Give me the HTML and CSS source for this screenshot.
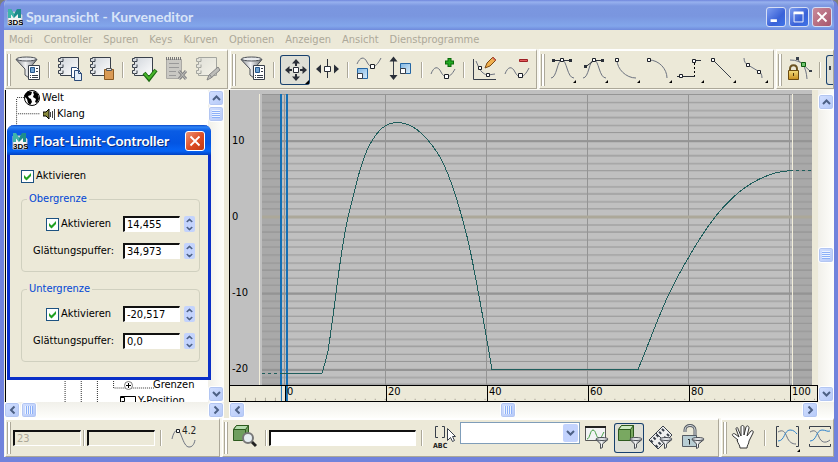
FILE: index.html
```html
<!DOCTYPE html>
<html lang="de">
<head>
<meta charset="utf-8">
<title>Spuransicht - Kurveneditor</title>
<link rel="stylesheet" href="styles.css">
</head>
<body>
<svg class="defs" aria-hidden="true">
  <defs>
    <linearGradient id="metal"><stop offset="0" stop-color="#8b8e92"/><stop offset=".45" stop-color="#f2f3f4"/><stop offset="1" stop-color="#6b6f75"/></linearGradient>
    <linearGradient id="paper" x1="0" y1="0" x2="1" y2="1"><stop offset="0" stop-color="#cfd4da"/><stop offset="1" stop-color="#ffffff"/></linearGradient>
    <linearGradient id="blue" x1="0" y1="0" x2="1" y2="1"><stop offset="0" stop-color="#7fb6e4"/><stop offset="1" stop-color="#d8ebf8"/></linearGradient>
    <linearGradient id="gold" x1="0" y1="0" x2="0" y2="1"><stop offset="0" stop-color="#f3dc7c"/><stop offset="1" stop-color="#c98f1e"/></linearGradient>
    <symbol id="app" viewBox="0 0 16 17">
      <path d="M1 3h11l3 3v10H1z" fill="#f4f4f4" stroke="#b9c3cc"/>
      <path d="M1 9V0h3l3 5 3-5h4v9h-3V5L7 9 4 5v4z" fill="#1d8d8c"/>
      <path d="M1 0h3l3 5v4L4 5v4H1z" fill="#3fb4a9"/>
      <text x="1" y="16" class="app-text">3DS</text>
    </symbol>
    <symbol id="funnel-page" viewBox="0 0 30 30">
      <path d="M3 4.500L12 14v6l4 3v-9l8-9.500z" fill="url(#metal)" stroke="#4a4e55"/>
      <ellipse cx="13.500" cy="4" rx="10" ry="2" fill="#e9ebed" stroke="#4a4e55"/>
      <path d="M15.500 10.500h11v14h-11z" fill="#fff" stroke="#39404b"/>
      <path d="M17.500 12.500h4v5h-4z" fill="#6fa2d2" stroke="#24558a"/>
      <path d="M23 13.500h2M23 16.500h2M19 20.500h6M19 22.500h6M17 20.500h1M17 22.500h1" stroke="#39404b"/>
    </symbol>
    <symbol id="notebook" viewBox="0 0 30 30">
      <path d="M5.500 2.500h18v18h-18v-2h-2v-3h2v-3h-2v-3h2v-3h-2v-3h2z" fill="url(#paper)" stroke="#39404b"/>
      <path d="M6 6.500h2v-3M6 12.500h2v-3M6 18.500h2v-3" fill="none" stroke="#39404b"/>
    </symbol>
    <symbol id="small-funnel" viewBox="0 0 14 12">
      <path d="M1 2.500L5.500 7v4.500l2-1V7L13 2.500z" fill="url(#metal)" stroke="#4a4e55"/>
      <ellipse cx="7" cy="2" rx="6" ry="1.500" fill="#e4e6e9" stroke="#4a4e55"/>
    </symbol>
    <symbol id="flyout" viewBox="0 0 4 4"><path d="M4 0v4H0z" fill="#000"/></symbol>
    <symbol id="chev" viewBox="0 0 9 6"><path d="M1 5l3.500-3.500L8 5" fill="none" stroke="#4d6185" stroke-width="2"/></symbol>
    <symbol id="tick" viewBox="0 0 13 13"><path d="M3 5v3l2.500 2.500L10 6V3L5.500 7.500z" fill="#21a121"/></symbol>
  </defs>
</svg>

<div class="window">
  <header class="titlebar">
    <svg class="app-icon" aria-hidden="true"><use href="#app"/></svg>
    <h1>Spuransicht - Kurveneditor</h1>
    <div class="caption-buttons">
      <button class="cap" aria-label="Minimieren"><svg viewBox="0 0 20 20"><path d="M4 14h7" stroke="#fff" stroke-width="3"/></svg></button>
      <button class="cap" aria-label="Maximieren"><svg viewBox="0 0 20 20"><path d="M4.500 5v10.500h10V5" fill="none" stroke="#fff"/><path d="M4 5.500h11" stroke="#fff" stroke-width="3"/></svg></button>
      <button class="cap cap-close" aria-label="Schließen"><svg viewBox="0 0 20 20"><path d="M5 5l10 10M15 5L5 15" stroke="#fff" stroke-width="2"/></svg></button>
    </div>
  </header>

  <nav class="menu">
    <button>Modi</button><button>Controller</button><button>Spuren</button><button>Keys</button><button>Kurven</button><button>Optionen</button><button>Anzeigen</button><button>Ansicht</button><button>Dienstprogramme</button>
  </nav>

  <div class="bar bar-top">
    <div class="group">
      <span class="grip"></span>
      <button class="tool" aria-label="Filter"><svg viewBox="0 0 30 30"><use href="#funnel-page"/></svg></button>
      <span class="sep"></span>
      <button class="tool" aria-label="Kopieren"><svg viewBox="0 0 30 30"><use href="#notebook"/><path d="M16.500 12.500h5l3 3v7h-8z" fill="#fff" stroke="#2b4a78"/><path d="M19.500 15.500h4l3 3v7h-7z" fill="#e3edf8" stroke="#2b4a78"/><path d="M23.500 15.500v3h3" fill="none" stroke="#2b4a78"/></svg></button>
      <button class="tool" aria-label="Einfügen"><svg viewBox="0 0 30 30"><use href="#notebook"/><path d="M17.500 14.500h9v10h-9z" fill="#d99a55" stroke="#8c5a22"/><path d="M19.500 13.500h5v2h-5z" fill="#e6e6e6" stroke="#555"/></svg></button>
      <span class="sep"></span>
      <button class="tool" aria-label="Zuweisen"><svg viewBox="0 0 30 30"><use href="#notebook"/><path d="M15 18l5 6 7-9" fill="none" stroke="#1d6b12" stroke-width="4"/><path d="M15.500 18.500l4.500 5 6.500-8" fill="none" stroke="#48b52b" stroke-width="2"/></svg></button>
      <button class="tool" aria-label="Löschen"><svg viewBox="0 0 30 30"><path d="M5.500 4.500h15v19h-15z" fill="#c9c8c3" stroke="#aaa9a4"/><path d="M5 3.500h16" stroke="#777" stroke-width="3" stroke-dasharray="1 1"/><path d="M8 8.500h10M8 12.500h10M8 16.500h7M8 20.500h7" stroke="#999"/><path d="M18 16l7 8M25 16l-7 8" stroke="#888" stroke-width="3"/><path d="M18 16l7 8M25 16l-7 8" stroke="#c2c2be"/></svg></button>
      <button class="tool" aria-label="Bearbeiten"><svg viewBox="0 0 30 30"><g opacity=".4"><use href="#notebook"/></g><path d="M14 25l2-5 9-8 2 3-9 8z" fill="#bdbdb9" stroke="#858585"/><path d="M17 20l2 3" stroke="#858585"/></svg></button>
    </div>
    <div class="group">
      <span class="grip"></span>
      <button class="tool" aria-label="Filter"><svg viewBox="0 0 30 30"><use href="#funnel-page"/></svg></button>
      <span class="sep"></span>
      <button class="tool pressed" aria-label="Keys verschieben"><svg viewBox="0 0 30 30"><path d="M13.500 12.500h5v5h-5z" fill="#fff" stroke="#2a2f38"/><path d="M16 7v4M16 19v4M8 15h4M20 15h4" stroke="#2a2f38" stroke-width="2"/><path d="M16 4l4 4.500h-8zM16 26l4-4.500h-8zM5 15l4.500-4v8zM27 15l-4.500-4v8z" fill="#2a2f38"/><use href="#flyout" x="25" y="25" width="4" height="4"/></svg></button>
      <button class="tool" aria-label="Keys schieben"><svg viewBox="0 0 30 30"><path d="M15.500 4v19" stroke="#2a2f38"/><path d="M12.500 11.500h6v5h-6z" fill="#fff" stroke="#2a2f38"/><path d="M4 14l5-4.500v9zM27 14l-5-4.500v9z" fill="#2a2f38"/></svg></button>
      <span class="sep"></span>
      <button class="tool" aria-label="Keys skalieren"><svg viewBox="0 0 30 30"><path d="M3 9c3-7 7-8 10-2s8 8 14-4" class="curve"/><path d="M16.500 9.500h4v4h-4z" class="key"/><path d="M3.500 13.500h10v10h-10z" fill="url(#blue)" stroke="#2466a4"/><path d="M3.500 18.500h5v5h-5z" fill="#fff" stroke="#39404b"/></svg></button>
      <button class="tool" aria-label="Werte skalieren"><svg viewBox="0 0 30 30"><path d="M7.500 4v19" stroke="#39404b"/><path d="M7.500 1.500l4 5h-8zM7.500 25l4-5h-8z" fill="#2a2f38"/><path d="M14.500 8.500h10v10h-10z" fill="url(#blue)" stroke="#2466a4"/><path d="M14.500 13.500h5v5h-5z" fill="#fff" stroke="#39404b"/></svg></button>
      <span class="sep"></span>
      <button class="tool" aria-label="Keys hinzufügen"><svg viewBox="0 0 30 30"><path d="M3 19c3-8 7-8 10-2s8 8 14-3" class="curve"/><path d="M16.500 19.500h4v4h-4z" class="key"/><path d="M21.500 3v9M17 7.500h9" stroke="#0a6a0a" stroke-width="4"/><path d="M21.500 4v7M18 7.500h7" stroke="#22a922" stroke-width="2"/></svg></button>
      <span class="sep"></span>
      <button class="tool" aria-label="Kurven zeichnen"><svg viewBox="0 0 30 30"><path d="M3.500 4v20.500H26" fill="none" stroke="#39404b"/><path d="M6 6l3 7c2 4 6 7 9 7l7-1" class="curve"/><path d="M8.500 11.500h3v3h-3zM16.500 18.500h3v3h-3z" class="key"/><path d="M15 13l2-5 6-6 3 3-6 6z" fill="#f0b04d" stroke="#7b4a14"/><path d="M22 3l3 3 1-1-3-3z" fill="#d25e57"/></svg></button>
      <button class="tool" aria-label="Keys reduzieren"><svg viewBox="0 0 30 30"><path d="M3 19c3-8 7-8 10-2s8 8 14-4" class="curve"/><path d="M16.500 18.500h4v4h-4z" class="key"/><path d="M17.500 4.500h8v2h-8z" fill="#e25c5c" stroke="#9c1f24"/></svg></button>
    </div>
    <div class="group">
      <span class="grip"></span>
      <button class="tool" aria-label="Automatische Tangente"><svg viewBox="0 0 30 30"><path d="M4 23c6 0 6-18 11-18s5 18 12 18" class="curve"/><path d="M7 5.500h16" stroke="#2a2f38"/><path d="M5 4h3v3H5zM22 4h3v3h-3z" fill="#2a2f38"/><path d="M13.500 3.500h3v3h-3z" class="key"/><use href="#flyout" x="26" y="25" width="3" height="3"/></svg></button>
      <button class="tool" aria-label="Spline-Tangente"><svg viewBox="0 0 30 30"><path d="M4 23c6 0 6-18 11-18s5 18 12 18" class="curve"/><path d="M7 11.500l8-6h8" fill="none" stroke="#2a2f38"/><path d="M5 10h3v3H5zM22 4h3v3h-3z" fill="#2a2f38"/><path d="M13.500 3.500h3v3h-3z" class="key"/><use href="#flyout" x="26" y="25" width="3" height="3"/></svg></button>
      <button class="tool" aria-label="Schnelle Tangente"><svg viewBox="0 0 30 30"><path d="M6 5c0 9 9 18 19 18" class="curve"/><path d="M4.500 3.500h3v3h-3z" class="key"/><use href="#flyout" x="26" y="25" width="3" height="3"/></svg></button>
      <button class="tool" aria-label="Langsame Tangente"><svg viewBox="0 0 30 30"><path d="M6 5c10 0 18 9 18 18" class="curve"/><path d="M4.500 3.500h3v3h-3z" class="key"/><use href="#flyout" x="26" y="25" width="3" height="3"/></svg></button>
      <button class="tool" aria-label="Stufentangente"><svg viewBox="0 0 30 30"><path d="M2 21.500h18M20 5.500h6" stroke="#2a2f38"/><path d="M19.500 8v13" stroke="#000" stroke-dasharray="2 2"/><path d="M4.500 19.500h3v3h-3zM17.500 4.500h3v3h-3z" class="key"/><use href="#flyout" x="26" y="25" width="3" height="3"/></svg></button>
      <button class="tool" aria-label="Lineare Tangente"><svg viewBox="0 0 30 30"><path d="M6 5l18 18" stroke="#39404b"/><path d="M4.500 3.500h3v3h-3z" class="key"/><use href="#flyout" x="26" y="25" width="3" height="3"/></svg></button>
      <button class="tool" aria-label="Glatte Tangente"><svg viewBox="0 0 30 30"><path d="M5 3c0 4 2 6 4 7l10 6c3 1 4 4 4 7" class="curve"/><path d="M7.500 8.500h3v3h-3zM18.500 15.500h3v3h-3z" class="key"/><use href="#flyout" x="26" y="25" width="3" height="3"/></svg></button>
    </div>
    <div class="group group-end">
      <span class="grip"></span>
      <button class="tool" aria-label="Tangenten sperren"><svg viewBox="0 0 30 30"><path d="M6 5c13 0 16 7 17 19M13 4l13 12" class="curve"/><path d="M12 2h3v3h-3zM25 15h3v2h-3z" fill="#39404b"/><path d="M17.500 7.500h4v4h-4z" fill="#6fc46f" stroke="#0e5d0e"/><path d="M6 16v-2c0-5 7-5 7 0v2" fill="none" stroke="#6d5524" stroke-width="2"/><path d="M4.500 15.500h10v9h-10z" fill="url(#gold)" stroke="#6b4a0f"/><path d="M9.500 18v3" stroke="#4a330a"/></svg></button>
      <span class="sep"></span>
      <button class="tool pressed" aria-label="Rahmen"><svg viewBox="0 0 30 30"><path d="M4 11v4" stroke="#39404b" stroke-width="2"/></svg></button>
    </div>
  </div>

  <main class="work">
    <section class="tree-panel">
      <div class="panel-row">
        <div class="tree">
          <svg class="branches" viewBox="0 0 200 313" preserveAspectRatio="xMinYMin slice" aria-hidden="true"><path d="M11 7.500h8M10.500 9v40M12 23.500h22" /><path d="M58.500 280v33M74.500 280v33M90.500 280v33M106.500 280v15h40" /></svg>
          <ul>
            <li class="welt"><svg viewBox="0 0 16 16"><circle cx="8" cy="8" r="7.500" fill="#fff" stroke="#000"/><path d="M1 4l3-3 4 1-1 3-3 1 1 2 2 1 1 3-2 3-2-2-1-4-3-3zM10 1l4 3 1 5-2 4-2-1 1-3-3-2 1-3-1-1z"/></svg>Welt</li>
            <li class="klang"><svg viewBox="0 0 12 12"><path d="M0 4h3l3-3v10L3 8H0z" fill="#8a8a3c" stroke="#000"/><path d="M7.500 4v5M9.500 3v7M11.500 1v11" stroke="#444"/></svg>Klang</li>
          </ul>
          <ul>
            <li class="grenzen"><svg viewBox="0 0 9 9"><circle cx="4.500" cy="4.500" r="4" fill="#fff" stroke="#777"/><path d="M2 4.500h5M4.500 2v5" stroke="#000"/></svg>Grenzen</li>
            <li class="ypos"><svg viewBox="0 0 16 16"><path d="M15.500 3.500H.500v12M15.500 3.500v12M.500 4.500h4v4h-3" fill="none" stroke="#000"/></svg>Y-Position</li>
          </ul>
        </div>
        <div class="scroll-v">
          <button class="sbtn" aria-label="Nach oben"><svg viewBox="0 0 9 6"><use href="#chev"/></svg></button>
          <span class="thumb"></span><span class="track"></span>
          <button class="sbtn down" aria-label="Nach unten"><svg viewBox="0 0 9 6"><use href="#chev"/></svg></button>
        </div>
      </div>
      <div class="scroll-h">
        <button class="sbtn left" aria-label="Nach links"><svg viewBox="0 0 9 6"><use href="#chev"/></svg></button>
        <span class="thumb"></span><span class="track"></span>
        <button class="sbtn right" aria-label="Nach rechts"><svg viewBox="0 0 9 6"><use href="#chev"/></svg></button>
      </div>
    </section>

    <section class="graph-panel">
      <div class="panel-row">
        <div class="graph">
          <div class="plot-row">
            <ol class="values"><li>10</li><li>0</li><li>-10</li><li>-20</li></ol>
            <svg class="plot" viewBox="262 94 550 290" preserveAspectRatio="none" role="img" aria-label="Funktionskurve">
              <defs><pattern id="rows" x="262" y="94" width="550" height="38" patternUnits="userSpaceOnUse"><path d="M0 .500h550M0 8.500h550M0 16.500h550M0 23.500h550M0 31.500h550" stroke="#949494"/></pattern></defs>
              <path d="M262 94h550v290H262z" fill="#c0c0c0"/>
              <path d="M262 94h19v290h-19zM793 94h19v290h-19z" fill="#a9a9a9"/>
              <path d="M262 94h550v290H262z" fill="url(#rows)"/>
              <path d="M284.500 94v290M385.500 94v290M486.500 94v290M587.500 94v290M688.500 94v290M789.500 94v290" stroke="#949494"/>
              <path d="M262 141h550M262 293h550M262 369h550" stroke="#949494" stroke-width="2"/>
              <path d="M262 216.500h550" stroke="#aca899" stroke-width="3"/>
              <path d="M792.500 94v290" stroke="#f2eeda"/>
              <path d="M281 94v290M287 94v290" stroke="#146fb4" stroke-width="2"/>
              <path class="graph-line" d="M262 372.500h19M790 170.500h22" stroke-dasharray="3 3"/>
              <path class="graph-line" d="M281 372.500H322L325 362 328 350C336 300 340 250 348 217S362 158 370 144 385 122.500 398 122.500 425 134 437 152 460 208 467 236 481 305 492 368.500H638C648 345 660 311 671 289S690 254 700 238 720 209 733 197 768 171 790 170.500"/>
            </svg>
          </div>
          <div class="ruler">
            <svg viewBox="230 386 588 14" preserveAspectRatio="none" aria-hidden="true"><path d="M245.500 397v3M255.500 397v3M265.500 397v3M275.500 397v3M285 398.500h533" stroke="#aca899" /><path d="M286 398.500h532" stroke="#ece9d8" stroke-width="3" stroke-dasharray="9 1"/><path d="M281.500 386v14" stroke="#146fb4"/><path d="M287 386v14" stroke="#146fb4" stroke-width="2"/></svg>
            <ol><li>0</li><li>20</li><li>40</li><li>60</li><li>80</li><li>100</li></ol>
          </div>
        </div>
        <div class="scroll-v graph-scroll">
          <button class="sbtn" aria-label="Nach oben"><svg viewBox="0 0 9 6"><use href="#chev"/></svg></button>
          <span class="track before"></span><span class="thumb"></span><span class="track after"></span>
          <button class="sbtn down" aria-label="Nach unten"><svg viewBox="0 0 9 6"><use href="#chev"/></svg></button>
        </div>
      </div>
      <div class="scroll-h graph-scroll-h">
        <button class="sbtn left" aria-label="Nach links"><svg viewBox="0 0 9 6"><use href="#chev"/></svg></button>
        <span class="track before"></span><span class="thumb"></span><span class="track after"></span>
        <button class="sbtn right" aria-label="Nach rechts"><svg viewBox="0 0 9 6"><use href="#chev"/></svg></button>
      </div>
    </section>

    <section class="dialog" role="dialog" aria-labelledby="dialog-title">
      <header>
        <svg class="app-icon" aria-hidden="true"><use href="#app"/></svg>
        <h2 id="dialog-title">Float-Limit-Controller</h2>
        <button class="cap close-active" aria-label="Schließen"><svg viewBox="0 0 20 20"><path d="M5 5l10 10M15 5L5 15" stroke="#fff" stroke-width="2"/></svg></button>
      </header>
      <div class="dialog-body">
        <label class="check"><input type="checkbox" checked><svg viewBox="0 0 13 13"><use href="#tick"/></svg>Aktivieren</label>
        <fieldset>
          <legend>Obergrenze</legend>
          <div class="line"><label class="check"><input type="checkbox" checked><svg viewBox="0 0 13 13"><use href="#tick"/></svg>Aktivieren</label><input class="sunken" type="text" value="14,455" aria-label="Obergrenze"><span class="spin"><button aria-label="Mehr"><svg viewBox="0 0 9 6"><use href="#chev"/></svg></button><button class="down" aria-label="Weniger"><svg viewBox="0 0 9 6"><use href="#chev"/></svg></button></span></div>
          <div class="line"><label for="buf1">Glättungspuffer:</label><input class="sunken" id="buf1" type="text" value="34,973"><span class="spin"><button aria-label="Mehr"><svg viewBox="0 0 9 6"><use href="#chev"/></svg></button><button class="down" aria-label="Weniger"><svg viewBox="0 0 9 6"><use href="#chev"/></svg></button></span></div>
        </fieldset>
        <fieldset>
          <legend>Untergrenze</legend>
          <div class="line"><label class="check"><input type="checkbox" checked><svg viewBox="0 0 13 13"><use href="#tick"/></svg>Aktivieren</label><input class="sunken" type="text" value="-20,517" aria-label="Untergrenze"><span class="spin"><button aria-label="Mehr"><svg viewBox="0 0 9 6"><use href="#chev"/></svg></button><button class="down" aria-label="Weniger"><svg viewBox="0 0 9 6"><use href="#chev"/></svg></button></span></div>
          <div class="line"><label for="buf2">Glättungspuffer:</label><input class="sunken" id="buf2" type="text" value="0,0"><span class="spin"><button aria-label="Mehr"><svg viewBox="0 0 9 6"><use href="#chev"/></svg></button><button class="down" aria-label="Weniger"><svg viewBox="0 0 9 6"><use href="#chev"/></svg></button></span></div>
        </fieldset>
      </div>
    </section>
  </main>

  <div class="bar bar-bottom">
    <div class="group group-stats">
      <span class="grip"></span>
      <input class="sunken stat" type="text" value="23" disabled aria-label="Frame">
      <span class="sep tight"></span>
      <input class="sunken stat" type="text" value="" disabled aria-label="Wert">
      <span class="sep"></span>
      <button class="tool" aria-label="Statistik"><svg viewBox="0 0 30 30"><path d="M5 16c2-9 6-12 9-4s5 12 8 12 5-2 6-7" class="curve"/><path d="M9.500 6.500h3v3h-3z" class="key"/><text x="15" y="11" class="icon-text">4.2</text></svg></button>
    </div>
    <div class="group group-select">
      <span class="grip"></span>
      <button class="tool" aria-label="Zoom auf Objekt"><svg viewBox="0 0 30 30"><path d="M3.500 6.500l3-4h12v11l-3 4h-12z" fill="#6f9e5e" stroke="#2d5a1e"/><path d="M3.500 6.500l3-4h12l-3 4z" fill="#b5dcae" stroke="#2d5a1e"/><path d="M15.500 6.500v11" stroke="#2d5a1e"/><path d="M21 18l5 5" stroke="#222" stroke-width="3"/><circle cx="18" cy="15" r="5" fill="#e6eef2" stroke="#777" stroke-width="2"/></svg></button>
      <span class="sep before-field"></span>
      <input class="sunken search" type="text" value="" aria-label="Name">
      <span class="sep"></span>
      <button class="tool" aria-label="Nach Namen bearbeiten"><svg viewBox="0 0 30 30"><path d="M10 3.500H7.500v11H10M14 3.500h2.500v11H14" fill="none" stroke="#39404b"/><path d="M19.500 5.500v12l3-3 2 4 2-1-2-4h3z" fill="#fff" stroke="#39404b"/><text x="5" y="25" class="icon-text abc">ABC</text></svg></button>
      <span class="combo"><select aria-label="Spurauswahl"><option></option></select><span class="combo-arrow"><svg viewBox="0 0 9 6"><use href="#chev"/></svg></span></span>
      <button class="tool" aria-label="Animierte Spuren"><svg viewBox="0 0 30 30"><path d="M3.500 3.500h20v14h-20z" fill="#f2f3f4" stroke="#555"/><path d="M3 4h21" stroke="#222" stroke-width="2"/><path d="M5 16c3 0 3-9 6-9s3 8 6 8 3-3 5-6" fill="none" stroke="#3e9a3e"/><use href="#small-funnel" x="13" y="14" width="14" height="12"/></svg></button>
      <button class="tool pressed" aria-label="Ausgewählte Objekte"><svg viewBox="0 0 30 30"><path d="M4.500 6.500l3-4h12v11l-3 4h-12z" fill="#79a861" stroke="#2d5a1e"/><path d="M4.500 6.500l3-4h12l-3 4z" fill="#cdeac2" stroke="#2d5a1e"/><path d="M16.500 6.500v11" stroke="#2d5a1e"/><use href="#small-funnel" x="15" y="14" width="14" height="12"/></svg></button>
      <button class="tool" aria-label="Ausgewählte Spuren"><svg viewBox="0 0 30 30"><path d="M3 17L17 3l9 9-14 14z" fill="#f0f0f0" stroke="#39404b"/><path d="M5 19L19 5M10 24L24 10" stroke="#39404b" stroke-width="3" stroke-dasharray="2 2"/><path d="M10 10l9 9" stroke="#39404b"/><use href="#small-funnel" x="13" y="14" width="14" height="12"/></svg></button>
      <button class="tool" aria-label="Nicht gesperrte Attribute"><svg viewBox="0 0 30 30"><path d="M7 9V7c0-6 10-6 10 0v6" fill="none" stroke="#555b63" stroke-width="3"/><path d="M7 9V7c0-6 10-6 10 0v6" fill="none" stroke="#dfe3e6"/><path d="M4.500 12.500h14v11h-14z" fill="#b8cdd3" stroke="#555b63"/><path d="M10 16.500h1.500v5" fill="none" stroke="#222"/><use href="#small-funnel" x="13" y="14" width="14" height="12"/></svg></button>
    </div>
    <div class="group group-end">
      <span class="grip"></span>
      <button class="tool" aria-label="Pan"><svg viewBox="0 0 30 30"><path d="M9 17L4 13c-2-2 1-3 2-2l4 3-3-8c0-2 2-2 2 0l3 7V4c0-2 3-2 3 0v8l2-8c1-2 3-1 3 1l-2 8 4-5c1-1 3 0 2 2l-4 8c0 3-2 4-2 7h-7c0-3-2-4-3-8z" fill="#fff" stroke="#333"/></svg></button>
      <span class="sep"></span>
      <button class="tool" aria-label="Horizontale Ausdehnung"><svg viewBox="0 0 30 30"><path d="M8 3.500H5.500v20H8M25 3.500h2.500v20H25" fill="none" stroke="#39404b"/><path d="M7 9c5-3 7 0 9 5s5 7 9 7" class="curve"/><path d="M7 18c7 0 6-11 12-11 4 0 5 2 7 4" fill="none" stroke="#2f83cc"/><use href="#flyout" x="26" y="26" width="3" height="3"/></svg></button>
      <button class="tool" aria-label="Vertikale Ausdehnung"><svg viewBox="0 0 30 30"><path d="M6.500 6V3.500h21V6M6.500 21v2.500h21V21" fill="none" stroke="#39404b"/><path d="M7 9c5-3 7 0 9 5s6 7 11 3" class="curve"/><path d="M7 18c7 0 6-11 12-11 4 0 5 2 8 1" fill="none" stroke="#2f83cc"/></svg></button>
    </div>
  </div>
</div>
</body>
</html>
```

FILE: styles.css
```css
* { box-sizing: border-box; }

body {
  margin: 0;
  background: #7d7f78;
  color: #000;
  font: 11px/14px "DejaVu Sans Condensed", "Open Sans", sans-serif;
}

button, input, select { font: inherit; color: inherit; margin: 0; padding: 0; }
button { border: 0; background: none; }
ul, ol { list-style: none; margin: 0; padding: 0; }
h1, h2 { margin: 0; font: bold 14px/18px Lato, sans-serif; white-space: nowrap; }
svg { display: block; }
.defs { position: absolute; width: 0; height: 0; }
.app-text { font: bold 8px "Liberation Sans", sans-serif; }
.app-icon { width: 16px; height: 17px; flex: none; }

.window {
  display: flex;
  flex-direction: column;
  height: 100vh;
  overflow: hidden;
  border: solid #7183dc;
  border-width: 0 4px 5px;
  border-radius: 7px 7px 0 0;
  background: #ece9d8;
}

/* Title bar */
.titlebar {
  display: flex;
  align-items: center;
  gap: 3px;
  height: 30px;
  flex: none;
  margin: 0 -4px;
  padding: 4px 6px 0 7px;
  background: linear-gradient(#6f86dc 0, #97b1ee 2px, #7b97e0 6px, #7a96df 16px, #82a6eb 26px, #6f8adc 30px);
}
.titlebar h1 { flex: 1; color: #d8e4f8; }
.caption-buttons { display: flex; gap: 3px; }
.cap {
  width: 20px;
  height: 20px;
  flex: none;
  border: 1px solid #d5def5;
  border-radius: 3px;
  background: linear-gradient(135deg, #7d9df0, #3a62d8 60%, #3f74e8);
}
.cap svg { width: 18px; height: 18px; }
.cap-close { background: linear-gradient(135deg, #c98a9a, #a8566c); }

/* Menu */
.menu { display: flex; gap: 11px; height: 19px; flex: none; padding: 0 5px; color: #aca899; }

/* Toolbars */
.bar { display: flex; gap: 2px; flex: none; padding-left: 1px; overflow: hidden; background: #f8f7f0; }
.bar-top { height: 41px; padding-bottom: 1px; }
.bar-bottom { height: 39px; }
.group {
  display: flex;
  align-items: center;
  gap: 2px;
  flex: none;
  padding: 0 4px 0 1px;
  border: solid #aca899;
  border-width: 0 1px 1px 0;
  border-top: 2px solid #fff;
  border-left: 1px solid #fff;
  background: #ece9d8;
}
.group-end { flex: 1 0 0; min-width: 0; overflow: hidden; padding-right: 0; }
.group-stats { width: 215px; }
.group-select { width: 497px; }
.grip {
  width: 4px;
  height: 32px;
  flex: none;
  border: solid #aca899;
  border-width: 0 1px;
  background: #fff;
}
.sep {
  width: 2px;
  height: 16px;
  flex: none;
  margin: 0 3px;
  border-left: 1px solid #aca899;
  background: #fff;
}
.sep.tight { margin: 0; }
.sep.before-field { margin-right: 0; }
.tool { width: 30px; height: 30px; flex: none; border-radius: 3px; }
.tool svg { width: 30px; height: 30px; }
.tool.pressed { box-shadow: inset 0 0 0 1px #17406d; background: #dedfd6; }
.curve { fill: none; stroke: #6d7380; }
.key { fill: #fff; stroke: #1c2028; }
.icon-text { font: 10px "DejaVu Sans Condensed", sans-serif; fill: #222; }
.icon-text.abc { font-size: 7px; font-weight: bold; }

.sunken {
  min-width: 0;
  height: 16px;
  border: 1px solid #fff;
  border-top: 2px solid #111;
  border-left: 2px solid #111;
  border-radius: 0;
  background: #fff;
  padding: 0 2px;
}
.stat { width: 68px; background: #ece9d8; color: #aca899; }
.search { width: 147px; }
.combo { display: flex; position: relative; width: 120px; height: 22px; margin-bottom: 10px; }
.combo select { flex: 1; appearance: none; border: 1px solid #7f9db9; border-radius: 0; background: #fff; }
.combo-arrow {
  position: absolute;
  top: 2px;
  right: 2px;
  display: flex;
  align-items: center;
  justify-content: center;
  width: 15px;
  height: 18px;
  border-radius: 2px;
  background: #c3d3fd;
  pointer-events: none;
}
.combo-arrow svg { width: 9px; height: 6px; transform: rotate(180deg); }

/* Scroll bars */
.scroll-v { display: flex; flex-direction: column; width: 16px; flex: none; background: linear-gradient(90deg, #f1f0ea, #fefefb); }
.scroll-h { display: flex; height: 16px; flex: none; background: linear-gradient(#f1f0ea, #fefefb); }
.sbtn, .thumb {
  display: flex;
  align-items: center;
  justify-content: center;
  width: 16px;
  height: 16px;
  flex: none;
  border: 1px solid #fff;
  border-radius: 3px;
  background: linear-gradient(135deg, #d3e0ff, #b5c9f8);
  box-shadow: inset 0 0 0 1px #b3c6f2;
}
.sbtn svg { width: 9px; height: 6px; flex: none; }
.down svg { transform: rotate(180deg); }
.left svg { transform: rotate(-90deg); }
.right svg { transform: rotate(90deg); }
.thumb::before { content: ""; width: 8px; height: 8px; background: repeating-linear-gradient(#eef4fe 0 1px, #8cb0f8 1px 2px); }
.scroll-h .thumb::before { background: repeating-linear-gradient(90deg, #eef4fe 0 1px, #8cb0f8 1px 2px); }
.track { flex: 1; }

/* Workspace */
.work { display: flex; flex: 1; min-height: 0; position: relative; }
.panel-row { display: flex; flex: 1; min-height: 0; }
.tree-panel { display: flex; flex-direction: column; width: 225px; flex: none; padding-right: 5px; }
.tree-panel .scroll-h .thumb { margin-left: 1px; }
.tree {
  display: flex;
  flex-direction: column;
  justify-content: space-between;
  flex: 1;
  position: relative;
  overflow: hidden;
  margin-left: 1px;
  border-left: 1px solid #000;
  background: #fff;
}
.branches { position: absolute; inset: 0; width: 100%; height: 100%; }
.branches path { fill: none; stroke: #333; stroke-dasharray: 1 1; }
.tree ul { position: relative; }
.tree ul + ul { margin-bottom: -7px; }
.tree li { display: flex; align-items: center; gap: 2px; height: 16px; }
.welt { padding-left: 18px; }
.welt svg { width: 16px; height: 16px; }
.klang { padding-left: 37px; }
.klang svg { width: 12px; height: 12px; }
.grenzen { padding-left: 118px; }
.grenzen svg { width: 9px; height: 9px; margin-right: 18px; }
.ypos { padding-left: 114px; }
.ypos svg { width: 16px; height: 16px; }

.graph-panel { display: flex; flex-direction: column; flex: 1; min-width: 0; }
.graph { display: flex; flex-direction: column; flex: 1; min-width: 0; border-left: 1px solid #000; background: #c0c0c0; }
.plot-row { display: flex; flex: 1; min-height: 0; padding-top: 4px; background: #c0c0c0; border-right: 6px solid #ece9d8; }
.values {
  display: flex;
  flex-direction: column;
  justify-content: space-between;
  width: 32px;
  flex: none;
  padding: 40px 0 9px 2px;
  border-right: 2px solid #c0c0c0;
  box-shadow: inset -1px 0 #f2eeda;
}
.plot { flex: 1; min-width: 0; height: 100%; }
.graph-line { fill: none; stroke: #1f5e5c; shape-rendering: crispEdges; }
.ruler { position: relative; height: 17px; flex: none; overflow: hidden; border: 1px solid #000; border-left: 0; background: #ece9d8; }
.ruler svg { position: absolute; inset: 0; width: 100%; height: 100%; }
.ruler ol { display: flex; position: relative; padding-left: 55px; }
.ruler li { width: 101px; flex: none; padding-left: 1px; border-left: 1px solid #000; line-height: 12px; height: 15px; }
.graph-scroll { padding-top: 4px; }
.graph-scroll .before { flex-grow: 137; }
.graph-scroll .after { flex-grow: 123; }
.graph-scroll-h { padding-right: 16px; }
.graph-scroll-h .before { flex-grow: 255; }
.graph-scroll-h .after { flex-grow: 285; }

/* Floating dialog */
.dialog {
  position: absolute;
  left: 3px;
  top: 35px;
  width: 204px;
  border: solid #0a2fc8;
  border-width: 0 3px 3px;
  border-radius: 7px 7px 0 0;
  background: #ece9d8;
}
.dialog header {
  display: flex;
  align-items: center;
  gap: 5px;
  height: 30px;
  margin: 0 -3px;
  padding: 2px 6px 0 5px;
  border-radius: 7px 7px 0 0;
  background: linear-gradient(#0a48c8 0, #2f84f5 2px, #0a5ce4 6px, #0355e3 18px, #0664f6 26px, #0341c0 30px);
}
.dialog h2 { flex: 1; min-width: 0; color: #fff; text-shadow: 1px 1px #0b2a7a; }
.close-active { background: linear-gradient(135deg, #ee9274, #dc4b22 55%, #c03a14); border-color: #fff; }
.dialog-body { padding: 14px 8px 15px 11px; }
.check { display: flex; align-items: center; gap: 2px; }
.check input { appearance: none; width: 13px; height: 13px; flex: none; border: 1px solid #1d5281; background: #fff; }
.check svg { width: 13px; height: 13px; flex: none; margin-left: -15px; pointer-events: none; }
fieldset { margin: 9px 0 0; padding: 10px 3px 12px 4px; border: 1px solid #d0d0bf; border-radius: 4px; min-width: 0; }
fieldset + fieldset { margin-top: 10px; }
legend { padding: 0 2px; margin-left: 1px; color: #0046d5; }
.line { display: flex; align-items: center; height: 16px; }
.line + .line { margin-top: 11px; }
.line > label { width: 97px; flex: none; justify-content: flex-end; padding-right: 9px; text-align: right; white-space: nowrap; }
.line > .check { padding-right: 12px; }
.line .sunken { width: 57px; flex: none; }
.spin { display: flex; flex-direction: column; width: 11px; height: 16px; margin-left: 4px; background: #c3d3fd; border-radius: 2px; }
.spin button { display: flex; align-items: center; justify-content: center; flex: 1; }
.spin svg { width: 7px; height: 5px; }
```
